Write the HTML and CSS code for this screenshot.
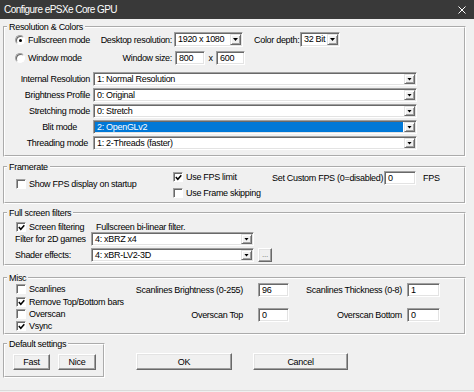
FILE: index.html
```html
<!DOCTYPE html>
<html lang="en">
<head>
    <meta charset="UTF-8">
    <meta name="viewport" content="width=device-width, initial-scale=1.0">
    <title>Configure ePSXe Core GPU</title>
    <link rel="stylesheet" href="styles.css">
</head>
<body>
    <div class="window">
        <div class="titlebar">
            <span class="title">Configure ePSXe Core GPU</span>
            <svg class="close-icon" width="8" height="8" viewBox="0 0 8 8"><path d="M0.5 0.5L7.5 7.5M7.5 0.5L0.5 7.5" stroke="#fff" stroke-width="1"/></svg>
        </div>

        <div class="dialog">
            <!-- Resolution & Colors -->
            <fieldset class="group group-res">
                <legend>Resolution &amp; Colors</legend>
                <div class="mode-row">
                    <div class="mode-cell"><span class="radio checked"></span>Fullscreen mode</div>
                    <span class="field-label">Desktop resolution:</span>
                    <div class="combo combo-desktop"><span class="combo-text">1920 x 1080</span><span class="combo-btn"></span></div>
                    <span class="depth-label">Color depth:</span>
                    <div class="combo combo-depth"><span class="combo-text">32 Bit</span><span class="combo-btn"></span></div>
                </div>
                <div class="mode-row window-row">
                    <div class="mode-cell"><span class="radio"></span>Window mode</div>
                    <span class="field-label">Window size:</span>
                    <div class="edit edit-width">800</div>
                    <span class="times">x</span>
                    <div class="edit edit-height">600</div>
                </div>
                <div class="combo-list">
                    <div class="combo-row">
                        <span class="combo-label">Internal Resolution</span>
                        <div class="combo combo-wide"><span class="combo-text">1: Normal Resolution</span><span class="combo-btn"></span></div>
                    </div>
                    <div class="combo-row">
                        <span class="combo-label">Brightness Profile</span>
                        <div class="combo combo-wide"><span class="combo-text">0: Original</span><span class="combo-btn"></span></div>
                    </div>
                    <div class="combo-row">
                        <span class="combo-label">Stretching mode</span>
                        <div class="combo combo-wide"><span class="combo-text">0: Stretch</span><span class="combo-btn"></span></div>
                    </div>
                    <div class="combo-row">
                        <span class="combo-label label-blit">Blit mode</span>
                        <div class="combo combo-wide combo-focus"><span class="combo-text">2: OpenGLv2</span><span class="combo-btn"></span></div>
                    </div>
                    <div class="combo-row">
                        <span class="combo-label label-thread">Threading mode</span>
                        <div class="combo combo-wide"><span class="combo-text">1: 2-Threads (faster)</span><span class="combo-btn"></span></div>
                    </div>
                </div>
            </fieldset>

            <!-- Framerate -->
            <fieldset class="group group-fps">
                <legend>Framerate</legend>
                <div class="fps-row">
                    <div class="check-item fps-show"><span class="check"></span>Show FPS display on startup</div>
                    <div class="fps-options">
                        <div class="check-item"><span class="check checked"><svg width="7" height="7" viewBox="0 0 7 7"><path d="M0.8 3L2.8 5.3L6.3 1.2" fill="none" stroke="#000" stroke-width="1.5"/></svg></span>Use FPS limit</div>
                        <div class="check-item"><span class="check"></span>Use Frame skipping</div>
                    </div>
                    <div class="fps-custom">
                        <span class="custom-label">Set Custom FPS (0=disabled)</span>
                        <div class="edit edit-fps">0</div>
                        <span class="fps-unit">FPS</span>
                    </div>
                </div>
            </fieldset>

            <!-- Full screen filters -->
            <fieldset class="group group-filters">
                <legend>Full screen filters</legend>
                <div class="filter-row">
                    <div class="check-item filter-check"><span class="check checked"><svg width="7" height="7" viewBox="0 0 7 7"><path d="M0.8 3L2.8 5.3L6.3 1.2" fill="none" stroke="#000" stroke-width="1.5"/></svg></span>Screen filtering</div>
                    <span>Fullscreen bi-linear filter.</span>
                </div>
                <div class="combo-row">
                    <span class="filter-label">Filter for 2D games</span>
                    <div class="combo combo-filter"><span class="combo-text">4: xBRZ x4</span><span class="combo-btn"></span></div>
                </div>
                <div class="combo-row shader-row">
                    <span class="filter-label">Shader effects:</span>
                    <div class="combo combo-filter"><span class="combo-text">4: xBR-LV2-3D</span><span class="combo-btn"></span></div>
                    <button class="btn btn-more">...</button>
                </div>
            </fieldset>

            <!-- Misc -->
            <fieldset class="group group-misc">
                <legend>Misc</legend>
                <div class="misc-body">
                    <div class="misc-checks">
                        <div class="check-item misc-item"><span class="check"></span>Scanlines</div>
                        <div class="check-item misc-item"><span class="check checked"><svg width="7" height="7" viewBox="0 0 7 7"><path d="M0.8 3L2.8 5.3L6.3 1.2" fill="none" stroke="#000" stroke-width="1.5"/></svg></span>Remove Top/Bottom bars</div>
                        <div class="check-item misc-item"><span class="check"></span>Overscan</div>
                        <div class="check-item misc-item"><span class="check checked"><svg width="7" height="7" viewBox="0 0 7 7"><path d="M0.8 3L2.8 5.3L6.3 1.2" fill="none" stroke="#000" stroke-width="1.5"/></svg></span>Vsync</div>
                    </div>
                    <div class="misc-fields">
                        <span class="misc-label label-left">Scanlines Brightness (0-255)</span>
                        <div class="edit edit-left">96</div>
                        <span class="misc-label label-right">Scanlines Thickness (0-8)</span>
                        <div class="edit edit-right">1</div>
                        <span class="misc-label label-left">Overscan Top</span>
                        <div class="edit edit-left">0</div>
                        <span class="misc-label label-right">Overscan Bottom</span>
                        <div class="edit edit-right">0</div>
                    </div>
                </div>
            </fieldset>

            <!-- Default settings + dialog buttons -->
            <div class="bottom-row">
                <fieldset class="group group-defaults">
                    <legend>Default settings</legend>
                    <div class="defaults-buttons">
                        <button class="btn btn-fast">Fast</button>
                        <button class="btn btn-nice">Nice</button>
                    </div>
                </fieldset>
                <button class="btn btn-ok">OK</button>
                <button class="btn btn-cancel">Cancel</button>
            </div>
        </div>
    </div>
</body>
</html>
```

FILE: styles.css
```css
body {
    margin: 0;
    background: #f0f0f0;
    font-family: "Liberation Sans", Arial, sans-serif;
    font-size: 9px;
    letter-spacing: -0.3px;
    color: #000;
    white-space: nowrap;
}

.window {
    width: 474px;
    height: 390px;
    background: #f0f0f0;
    border-bottom: 1px solid #dadada;
}

/* title bar */
.titlebar {
    height: 19px;
    background: #393939;
    color: #fff;
    display: flex;
    align-items: center;
    justify-content: space-between;
    padding: 0 8px 0 4px;
}

.title {
    font-size: 10px;
    letter-spacing: -0.55px;
}

.dialog {
    padding: 2px 8px 0 3px;
}

/* group boxes (etched) */
.group {
    margin: 0;
    padding: 0;
    min-inline-size: 0;
    border: 2px groove #fff;
}

.group legend {
    margin-left: 2px;
    padding: 0 2px;
    line-height: 12px;
}

/* 3d controls */
.edit,
.combo {
    box-sizing: border-box;
    height: 14px;
    background: #fff;
    border: 1px solid;
    border-color: #a0a0a0 #fff #fff #a0a0a0;
    box-shadow: inset 1px 1px #696969, inset -1px -1px #e3e3e3;
}

.edit {
    padding-left: 3px;
    line-height: 12px;
}

.combo {
    display: flex;
    padding: 1px;
}

.combo-text {
    flex: 1;
    padding-left: 2px;
    line-height: 10px;
    overflow: hidden;
}

.combo-btn {
    width: 11px;
    box-sizing: border-box;
    background: #f0f0f0;
    border: 1px solid;
    border-color: #e3e3e3 #696969 #696969 #e3e3e3;
    box-shadow: inset 1px 1px #fff, inset -1px -1px #a0a0a0;
    display: flex;
    align-items: center;
    justify-content: center;
}

.combo-btn::after {
    content: "";
    width: 5px;
    height: 3px;
    background: #000;
    clip-path: polygon(0 0, 100% 0, 50% 100%);
}

.combo-focus .combo-text {
    background: #0078d7;
    color: #fff;
    margin-right: 1px;
}

.btn {
    box-sizing: border-box;
    font: inherit;
    letter-spacing: inherit;
    color: #000;
    background: #f0f0f0;
    padding: 0;
    border: 1px solid;
    border-color: #fff #696969 #696969 #fff;
    box-shadow: inset -1px -1px #a0a0a0, inset 1px 1px #e3e3e3;
}

.check-item {
    display: flex;
    align-items: center;
}

.check,
.radio {
    box-sizing: border-box;
    width: 10px;
    height: 10px;
    margin-right: 3px;
    background: #fff;
    border: 1px solid;
    border-color: #a0a0a0 #fff #fff #a0a0a0;
    box-shadow: inset 1px 1px #696969;
    display: flex;
    align-items: center;
    justify-content: center;
    flex-shrink: 0;
}

.check svg {
    margin: 1px 0 0 1px;
}

.radio {
    border-radius: 50%;
    margin-right: 3px;
}

.radio.checked::after {
    content: "";
    width: 3px;
    height: 3px;
    border-radius: 50%;
    background: #000;
    margin: 1px 0 0 1px;
}

/* Resolution & Colors */
.group-res {
    padding-bottom: 5px;
}

.mode-row {
    display: flex;
    align-items: center;
    height: 15px;
    margin-top: -1px;
}

.mode-row .combo {
    height: 15px;
}

.window-row {
    height: 14px;
    margin-top: 4px;
}

.mode-cell {
    box-sizing: border-box;
    width: 95px;
    padding-left: 10px;
    display: flex;
    align-items: center;
}

.field-label {
    width: 72px;
    text-align: right;
    margin-right: 2px;
}

.window-row .field-label {
    margin-right: 3px;
}

.combo-desktop {
    width: 69px;
}

.depth-label {
    margin: 0 3px 0 11px;
    width: 43px;
}

.combo-depth {
    width: 40px;
}

.edit-width {
    width: 30px;
}

.times {
    width: 11px;
    text-align: center;
}

.edit-height {
    width: 29px;
}

.combo-list {
    margin-top: 7px;
    display: flex;
    flex-direction: column;
    gap: 2px;
}

.combo-row {
    display: flex;
    align-items: center;
}

.combo-label {
    box-sizing: border-box;
    width: 85px;
    text-align: right;
    margin-right: 3px;
}

.label-blit {
    padding-right: 13px;
}

.label-thread {
    padding-right: 2px;
}

.combo-wide {
    width: 324px;
}

/* Framerate */
.group-fps {
    margin-top: 4px;
    padding-bottom: 2px;
}

.fps-row {
    display: flex;
    height: 30px;
    margin-top: -3px;
}

.fps-show {
    box-sizing: border-box;
    width: 168px;
    height: 14px;
    margin-top: 7px;
    padding-left: 11px;
}

.fps-options {
    width: 99px;
    display: flex;
    flex-direction: column;
    gap: 2px;
}

.fps-options .check-item {
    height: 14px;
}

.fps-custom {
    display: flex;
    align-items: center;
    height: 14px;
    margin-top: 1px;
}

.custom-label {
    width: 112px;
}

.edit-fps {
    width: 32px;
}

.fps-unit {
    margin-left: 7px;
}

/* Full screen filters */
.group-filters {
    margin-top: 3px;
    padding-bottom: 2px;
}

.filter-row {
    display: flex;
    align-items: center;
    height: 11px;
    margin-top: 2px;
}

.filter-check {
    box-sizing: border-box;
    width: 91px;
    padding-left: 11px;
}

.filter-label {
    box-sizing: border-box;
    width: 86px;
    padding-left: 10px;
}

.combo-filter {
    width: 163px;
}

.shader-row {
    margin-top: 2px;
}

.btn-more {
    width: 14px;
    height: 14px;
    margin-left: 4px;
    font-size: 8px;
    line-height: 8px;
    color: #6d6d6d;
}

/* Misc */
.group-misc {
    margin-top: 6px;
    padding-bottom: 1px;
}

.misc-body {
    display: flex;
    margin-top: -2px;
}

.misc-checks {
    width: 120px;
    display: grid;
    grid-template-rows: 13px 13px 12px 12px;
}

.misc-item {
    padding-left: 11px;
}

.misc-fields {
    display: grid;
    grid-template-columns: 133px 31px 118px 33px;
    grid-template-rows: 14px 14px;
    row-gap: 11px;
    align-items: center;
    margin-top: 1px;
}

.misc-label {
    text-align: right;
}

.label-left {
    padding-right: 15px;
}

.label-right {
    padding-right: 5px;
}

.edit-left {
    width: 31px;
}

.edit-right {
    width: 33px;
}

/* Default settings + dialog buttons */
.bottom-row {
    display: flex;
    align-items: flex-start;
    margin-top: 3px;
}

.group-defaults {
    width: 98px;
}

.defaults-buttons {
    display: flex;
    gap: 8px;
    padding: 4px 3px 6px 8px;
}

.btn-fast {
    width: 37px;
    height: 16px;
}

.btn-nice {
    width: 38px;
    height: 16px;
}

.btn-ok {
    width: 96px;
    height: 17px;
    margin: 15px 0 0 31px;
}

.btn-cancel {
    width: 95px;
    height: 17px;
    margin: 15px 0 0 21px;
}
```
